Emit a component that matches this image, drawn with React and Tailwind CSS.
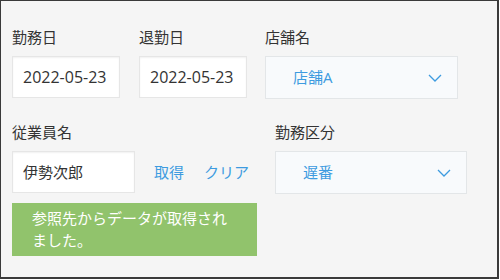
import React from 'react';

const font = { fontFamily: '"Open Sans", "Noto Sans CJK JP", sans-serif' };

const Chevron = () => (
  <svg width="14" height="8" viewBox="0 0 14 8" fill="none" className="shrink-0">
    <path d="M1 1l6 6 6-6" stroke="#3d9be0" strokeWidth="1.3" />
  </svg>
);

const Field = ({ label, className = '', children }) => (
  <div className={`flex flex-col ${className}`}>
    <div className="h-5 leading-5 text-[15px] text-[#333]">{label}</div>
    <div className="mt-[9px]">{children}</div>
  </div>
);

const TextBox = ({ value, width, size = 'text-[15px]' }) => (
  <div
    className={`${width} ${size} h-[42px] flex items-center pl-[10px] bg-white border border-[#e6e6e6] shadow-[inset_0_1px_2px_rgba(0,0,0,0.06)] text-[#333]`}
  >
    {value}
  </div>
);

const Select = ({ value, width }) => (
  <div
    className={`${width} h-[43px] flex items-center justify-between pl-[27px] pr-[15px] bg-[#f8fafc] border border-[#e3e6e8] text-[15px] text-[#3d9be0]`}
  >
    <span>{value}</span>
    <Chevron />
  </div>
);

export default function App() {
  return (
    <div className="w-[500px] h-[280px] bg-white" style={font}>
      <div className="w-[499px] h-[279px] bg-[#f5f5f5] border-t border-l border-r-2 border-b-2 border-[#3a3a3a] pl-[11px] pt-[26px]">
        <div className="flex">
          <Field label="勤務日">
            <TextBox value="2022-05-23" width="w-[108px]" size="text-[16px]" />
          </Field>
          <Field label="退勤日" className="ml-[19px]">
            <TextBox value="2022-05-23" width="w-[108px]" size="text-[16px]" />
          </Field>
          <Field label="店舗名" className="ml-[18px]">
            <Select value="店舗A" width="w-[193px]" />
          </Field>
        </div>

        <div className="flex mt-[23px]">
          <Field label="従業員名">
            <div className="flex items-center">
              <TextBox value="伊勢次郎" width="w-[123px]" />
              <button className="ml-[19px] text-[15px] text-[#3d9be0]">取得</button>
              <button className="ml-[20px] text-[15px] text-[#3d9be0]">クリア</button>
            </div>
          </Field>
          <Field label="勤務区分" className="ml-[26px]">
            <Select value="遅番" width="w-[192px]" />
          </Field>
        </div>

        <div className="mt-[9px] w-[245px] h-[53px] bg-[#91c36c] pl-[20px] py-[4px]">
          <p className="w-[200px] text-[15px] leading-[22px] text-white">
            参照先からデータが取得されました。
          </p>
        </div>
      </div>
    </div>
  );
}
